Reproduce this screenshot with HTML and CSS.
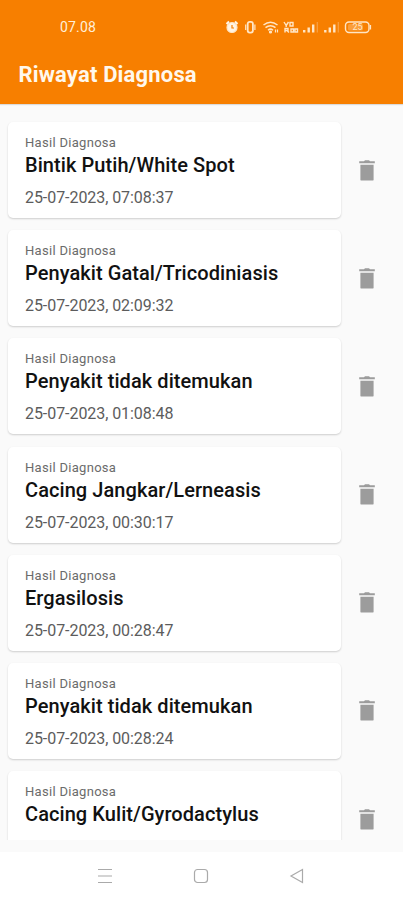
FILE: index.html
```html
<!DOCTYPE html>
<html lang="id">
<head>
<meta charset="UTF-8">
<meta name="viewport" content="width=device-width, initial-scale=1.0">
<title>Riwayat Diagnosa</title>
<link rel="stylesheet" href="styles.css">
</head>
<body>
<!-- trash icon used by every row -->
<svg class="defs" width="0" height="0">
    <symbol id="trash" viewBox="0 0 16 21">
        <path d="M5 1.2 6 0.3H10L11 1.2H15.8V3.2H0.2V1.2Z"/>
        <path d="M1.4 4.8H14.6V19.4Q14.6 20.6 13.4 20.6H2.6Q1.4 20.6 1.4 19.4Z"/>
    </symbol>
</svg>
<div class="screen">
    <header class="app-header">
        <div class="status-bar">
            <span class="clock">07.08</span>
            <svg class="status-icons" width="150" height="16" viewBox="0 0 150 16">
                <!-- alarm -->
                <circle cx="7" cy="8.5" r="5" fill="#fff4e4"/>
                <path d="M1.5 5 4 2.5M12.5 5 10 2.5" stroke="#fff4e4" stroke-width="2"/>
                <path d="M7 6V9H9" fill="none" stroke="#f77f00" stroke-width="1.2"/>
                <!-- vibrate -->
                <rect x="22.7" y="2.8" width="5.2" height="10.8" rx="2" stroke-width="1.8"/>
                <path d="M20.7 5.5V11M29.9 5.5V11" stroke-width="1.2"/>
                <!-- wifi -->
                <path d="M38.5 6Q45.5 0.5 52.5 6M40.5 8.7Q45.5 4.8 50.5 8.7M43 11.2Q45.5 9 48 11.2" stroke-width="1.5"/>
                <circle cx="45.5" cy="13" r="1" fill="#ffe6c6"/>
                <path d="M50.5 10.5V13.5M52.5 10.5V13.5"/>
                <!-- network -->
                <path d="M59 3 61.2 6.5 63.5 3M61.2 6.5V8M65 3.5H68V7H65ZM60 13.5V9.5H63V11.5H60M62 11.5 64 13.5M66 10H68.5V13H66ZM70 10H72.5V13H70Z" stroke-width="1.4"/>
                <!-- signal -->
                <path class="bars" d="M79.2 13.5V11M83.7 13.5V8.5M88.2 13.5V5.5"/>
                <path class="faint" d="M92.3 13.5V3"/>
                <path class="bars" d="M100.3 13.5V11M104.8 13.5V8.5M109.3 13.5V5.5"/>
                <path class="faint" d="M113.3 13.5V3"/>
                <!-- battery -->
                <rect x="120.5" y="3" width="23.5" height="10.5" rx="3.5" stroke-width="1.4"/>
                <path d="M145.5 6V10.5"/>
                <rect x="123" y="5" width="15" height="6.5" rx="1.5" fill="#ffd9a8" stroke="none" opacity="0.35"/>
                <text x="132.5" y="11.3" text-anchor="middle">25</text>
            </svg>
        </div>
        <h1>Riwayat Diagnosa</h1>
    </header>

    <main class="history">
        <div class="row">
            <div class="card">
                <p class="label">Hasil Diagnosa</p>
                <h2>Bintik Putih/White Spot</h2>
                <p class="date">25-07-2023, 07:08:37</p>
            </div>
            <svg class="trash"><use href="#trash"/></svg>
        </div>
        <div class="row">
            <div class="card">
                <p class="label">Hasil Diagnosa</p>
                <h2>Penyakit Gatal/Tricodiniasis</h2>
                <p class="date">25-07-2023, 02:09:32</p>
            </div>
            <svg class="trash"><use href="#trash"/></svg>
        </div>
        <div class="row">
            <div class="card">
                <p class="label">Hasil Diagnosa</p>
                <h2>Penyakit tidak ditemukan</h2>
                <p class="date">25-07-2023, 01:08:48</p>
            </div>
            <svg class="trash"><use href="#trash"/></svg>
        </div>
        <div class="row">
            <div class="card">
                <p class="label">Hasil Diagnosa</p>
                <h2>Cacing Jangkar/Lerneasis</h2>
                <p class="date">25-07-2023, 00:30:17</p>
            </div>
            <svg class="trash"><use href="#trash"/></svg>
        </div>
        <div class="row">
            <div class="card">
                <p class="label">Hasil Diagnosa</p>
                <h2>Ergasilosis</h2>
                <p class="date">25-07-2023, 00:28:47</p>
            </div>
            <svg class="trash"><use href="#trash"/></svg>
        </div>
        <div class="row">
            <div class="card">
                <p class="label">Hasil Diagnosa</p>
                <h2>Penyakit tidak ditemukan</h2>
                <p class="date">25-07-2023, 00:28:24</p>
            </div>
            <svg class="trash"><use href="#trash"/></svg>
        </div>
        <div class="row">
            <div class="card">
                <p class="label">Hasil Diagnosa</p>
                <h2>Cacing Kulit/Gyrodactylus</h2>
            </div>
            <svg class="trash"><use href="#trash"/></svg>
        </div>
    </main>

    <nav class="nav-bar">
        <svg width="16" height="16" viewBox="0 0 16 16"><path d="M1 1.5H15M1 8H15M1 14.5H15"/></svg>
        <svg width="16" height="16" viewBox="0 0 16 16"><rect x="1.5" y="1.5" width="13" height="13" rx="3"/></svg>
        <svg width="16" height="16" viewBox="0 0 16 16"><path d="M13.5 1.5V14.5L2 8Z"/></svg>
    </nav>
</div>
</body>
</html>
```
FILE: styles.css
```css
body {
    margin: 0;
    background-color: #fff;
    font-family: Roboto, sans-serif;
}
.defs {
    display: none;
}
.screen {
    display: flex;
    flex-direction: column;
    height: 900px;
    overflow: hidden;
    background-color: #fafafa;
}
.app-header {
    flex: none;
    box-sizing: border-box;
    height: 104px;
    background-color: #f77f00;
    color: #fff8ec;
    box-shadow: 0 1px 1px rgba(0, 0, 0, 0.12);
}
.status-bar {
    display: flex;
    justify-content: space-between;
    align-items: center;
    height: 38px;
    padding: 8px 28px 0 60px;
    box-sizing: border-box;
}
.clock {
    font-size: 14px;
    line-height: 30px;
    letter-spacing: 0.15px;
    padding-top: 7px;
    color: #ffeed8;
}
.status-icons {
    margin-top: 7px;
    fill: none;
    stroke: #ffe6c6;
    stroke-width: 1.2;
}
.status-icons .bars {
    stroke-width: 2.4;
}
.status-icons .faint {
    opacity: 0.35;
}
.status-icons text {
    font-size: 9px;
    fill: #ffe6c6;
    stroke: none;
}
h1 {
    margin: 23px 0 0 18.5px;
    font-size: 22px;
    line-height: 27px;
    letter-spacing: 0.17px;
    font-weight: 700;
}
.history {
    height: 736px;
    flex: none;
    box-sizing: border-box;
    padding: 18px 28px 0 8px;
    overflow: hidden;
}
.row {
    display: flex;
    justify-content: space-between;
    align-items: center;
    height: 96px;
    margin-bottom: 12.2px;
}
.card {
    box-sizing: border-box;
    width: 333px;
    height: 96px;
    padding: 12px 17px;
    background-color: #fff;
    border-radius: 5px;
    box-shadow: 0 1px 2px rgba(0, 0, 0, 0.18);
}
.card p, .card h2 {
    margin: 0;
    white-space: nowrap;
}
.card .label {
    font-size: 13px;
    line-height: 18px;
    letter-spacing: 0.3px;
    color: #6b6b6b;
}
.card h2 {
    font-size: 20px;
    line-height: 27px;
    letter-spacing: 0.07px;
    font-weight: 500;
    color: #111;
}
.card .date {
    margin-top: 8px;
    font-size: 16px;
    line-height: 22px;
    letter-spacing: -0.06px;
    color: #5c5c5c;
}
.trash {
    width: 16px;
    height: 21px;
    fill: #9c9c9c;
}
.nav-bar {
    display: flex;
    flex: 1;
    justify-content: center;
    gap: 80px;
    margin-top: 12px;
    padding: 16px 2px 0 0;
    background-color: #fff;
}
.nav-bar svg {
    fill: none;
    stroke: #aaa;
    stroke-width: 1.2;
}
```
